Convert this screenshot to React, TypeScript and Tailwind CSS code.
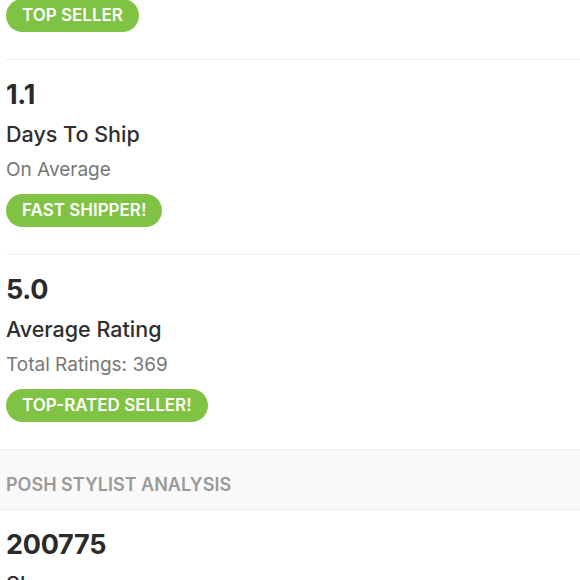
const font = { fontFamily: '"Inter", "Lato", sans-serif' };

function Pill({ children }: { children: React.ReactNode }) {
  return (
    <span className="inline-flex h-[33px] items-center rounded-full bg-[#80c243] px-4 text-[17px] font-semibold uppercase text-white">
      {children}
    </span>
  );
}

function Stat({
  value,
  label,
  sub,
  badge,
}: {
  value: string;
  label: string;
  sub?: string;
  badge?: string;
}) {
  return (
    <div className="border-t border-[#ececec] pb-[27px] pt-[17px]">
      <p className="text-[27px] font-bold leading-[36px] tracking-[-0.01em] text-[#2a2a2a]">{value}</p>
      <p className="mt-[7px] text-[21.5px] font-medium leading-[28px] text-[#2f2f2f]">{label}</p>
      {sub && <p className="mt-[10px] text-[19px] leading-[24px] text-[#777]">{sub}</p>}
      {badge && (
        <div className="mt-[12px]">
          <Pill>{badge}</Pill>
        </div>
      )}
    </div>
  );
}

export default function App() {
  return (
    <div className="h-[580px] w-[580px] overflow-hidden bg-white" style={font}>
      <div className="pl-[6px]">
        <div className="-mt-px pb-[27px]">
          <Pill>Top Seller</Pill>
        </div>
        <Stat value="1.1" label="Days To Ship" sub="On Average" badge="Fast Shipper!" />
        <Stat value="5.0" label="Average Rating" sub="Total Ratings: 369" badge="Top-Rated Seller!" />
      </div>
      <div className="flex h-[61px] items-center border-y border-[#eeeeee] bg-[#f9f9f9] pl-[6px]">
        <p className="pt-[9px] text-[18px] font-semibold uppercase text-[#9a9a9a]">
          Posh Stylist Analysis
        </p>
      </div>
      <div className="pl-[6px]">
        <div className="pt-[17px]">
          <p className="text-[27px] font-bold leading-[36px] tracking-[-0.01em] text-[#2a2a2a]">200775</p>
          <p className="mt-[7px] text-[21.5px] font-medium leading-[28px] text-[#2f2f2f]">Shares</p>
        </div>
      </div>
    </div>
  );
}
